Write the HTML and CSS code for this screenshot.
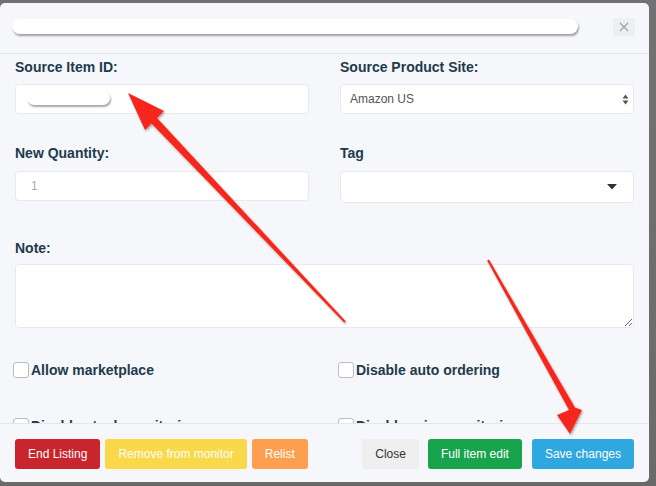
FILE: index.html
```html
<!DOCTYPE html>
<html>
<head>
<meta charset="utf-8">
<link rel="stylesheet" href="styles.css">
</head>
<body>
<div class="modal">
  <div class="modal-header">
    <div class="redact redact-title"></div>
    <button class="close-x" aria-label="Close">
      <svg width="10" height="10" viewBox="0 0 10 10"><path d="M1 1L9 9M9 1L1 9" stroke="#9a9ea4" stroke-width="1.1" fill="none"/></svg>
    </button>
  </div>
  <div class="modal-body">
    <div class="row row-1">
      <div class="field">
        <label class="lbl">Source Item ID:</label>
        <div class="input input-id"><span class="redact redact-id"></span></div>
      </div>
      <div class="field">
        <label class="lbl">Source Product Site:</label>
        <div class="input select">
          <span>Amazon US</span>
          <svg class="updown" width="7" height="11" viewBox="0 0 7 11"><path d="M3.5 0.5L6.5 4.5H0.5Z M3.5 10.5L6.5 6.5H0.5Z" fill="#555"/></svg>
        </div>
      </div>
    </div>
    <div class="row row-2">
      <div class="field">
        <label class="lbl lbl-2">New Quantity:</label>
        <div class="input placeholder">1</div>
      </div>
      <div class="field">
        <label class="lbl lbl-2">Tag</label>
        <div class="input tag">
          <svg class="caret" width="10" height="6" viewBox="0 0 10 6"><path d="M0 0H10L5 5.5Z" fill="#333"/></svg>
        </div>
      </div>
    </div>
    <div class="note-group">
      <label class="lbl">Note:</label>
      <textarea class="note"></textarea>
    </div>
    <div class="checks">
      <div class="check"><span class="box"></span>Allow marketplace</div>
      <div class="check"><span class="box"></span>Disable auto ordering</div>
      <div class="check"><span class="box"></span>Disable stock monitoring</div>
      <div class="check"><span class="box"></span>Disable price monitoring</div>
    </div>
  </div>
  <div class="modal-footer">
    <div class="group-left">
      <button class="btn btn-red">End Listing</button>
      <button class="btn btn-yellow">Remove from monitor</button>
      <button class="btn btn-orange">Relist</button>
    </div>
    <div class="group-right">
      <button class="btn btn-grey">Close</button>
      <button class="btn btn-green">Full item edit</button>
      <button class="btn btn-blue">Save changes</button>
    </div>
  </div>
</div>
<svg class="arrows" width="656" height="486" viewBox="0 0 656 486">
  <defs>
    <filter id="sh" x="-10%" y="-10%" width="120%" height="120%">
      <feDropShadow dx="1" dy="1.5" stdDeviation="1" flood-color="#000" flood-opacity="0.35"/>
    </filter>
  </defs>
  <g fill="#f7261b" filter="url(#sh)">
    <polygon points="128,93 164,111 157,118 345.7,321.3 344.3,322.7 151.5,123.5 145,130"/>
    <polygon points="570,434 582,410 575,407.5 488.9,259.6 487.1,260.4 569,410 557,415"/>
  </g>
</svg>
</body>
</html>
```
FILE: styles.css
```css
html, body {
  margin: 0;
  padding: 0;
}
body {
  width: 656px;
  height: 486px;
  overflow: hidden;
  background: linear-gradient(#727272, #6a6a6a);
  padding-top: 3px;
  box-sizing: border-box;
  font-family: "Liberation Sans", Arial, sans-serif;
  position: relative;
}
.modal {
  width: 649px;
  height: 479px;
  background: #f5f7fa;
  border-radius: 5px;
  display: flex;
  flex-direction: column;
  overflow: hidden;
}
.modal-header {
  height: 51px;
  flex: none;
  border-bottom: 1px solid #e3e6ea;
  position: relative;
  display: flex;
  align-items: flex-start;
  justify-content: flex-end;
  padding: 12px 14px 0 0;
  box-sizing: border-box;
}
.redact {
  display: block;
  background: #fff;
  border-radius: 8px;
  box-shadow: 1px 2px 2px rgba(0,0,0,0.35);
}
.redact-title {
  position: absolute;
  left: 12px;
  top: 16px;
  width: 566px;
  height: 15px;
}
.close-x {
  width: 22px;
  height: 18px;
  margin-top: 3px;
  border: none;
  border-radius: 3px;
  background: #eceef1;
  display: flex;
  align-items: center;
  justify-content: center;
  padding: 0;
}
.modal-body {
  height: 369px;
  flex: none;
  overflow: hidden;
  padding: 5px 15px 0 15px;
  box-sizing: border-box;
}
.row {
  display: grid;
  grid-template-columns: 294px 294px;
  column-gap: 31px;
}
.row-1 {
  margin-bottom: 31px;
}
.row-2 {
  margin-bottom: 37px;
}
.lbl {
  display: block;
  font-size: 14px;
  line-height: 17px;
  font-weight: bold;
  color: #1e3a4c;
  margin-bottom: 8px;
}
.lbl-2 {
  margin-bottom: 9px;
}
.input {
  height: 30px;
  background: #fff;
  border: 1px solid #e6e9ed;
  border-radius: 4px;
  box-sizing: border-box;
  display: flex;
  align-items: center;
  padding: 0 9px 0 9px;
  font-size: 12px;
  color: #555;
}
.input-id {
  padding-left: 11px;
}
.redact-id {
  width: 83px;
  height: 14px;
  border-radius: 7px;
  margin-top: -2px;
}
.select {
  justify-content: space-between;
  padding-right: 4px;
}
.placeholder {
  color: #aaa;
  padding-left: 15px;
}
.tag {
  height: 32px;
  justify-content: flex-end;
  padding-right: 16px;
}
.note-group .lbl {
  margin-bottom: 7px;
}
.note {
  display: block;
  width: 619px;
  height: 64px;
  box-sizing: border-box;
  border: 1px solid #e6e9ed;
  border-radius: 4px;
  background: #fff;
  margin: 0;
}
.checks {
  display: grid;
  grid-template-columns: 325px 294px;
  row-gap: 40px;
  margin-top: 34px;
  margin-left: -2px;
}
.check {
  display: flex;
  align-items: center;
  font-size: 14px;
  line-height: 15px;
  font-weight: bold;
  color: #1e3a4c;
}
.box {
  width: 14px;
  height: 14px;
  border: 1px solid #b9bcc0;
  border-radius: 3px;
  background: #fff;
  margin-right: 2px;
  flex: none;
}
.modal-footer {
  flex: none;
  height: 59px;
  border-top: 1px solid #e3e6ea;
  box-sizing: border-box;
  display: flex;
  justify-content: space-between;
  padding: 15px 15px 0 15px;
}
.group-left, .group-right {
  display: flex;
  align-items: flex-start;
}
.group-left .btn + .btn {
  margin-left: 5px;
}
.btn {
  height: 30px;
  border: none;
  border-radius: 3px;
  padding: 0 13px;
  font-family: "Liberation Sans", Arial, sans-serif;
  font-size: 12px;
  color: #fff;
  cursor: pointer;
}
.btn-red { background: #c8252c; }
.btn-yellow { background: #f9d849; }
.btn-orange { background: #fe9f4f; }
.btn-grey { background: #efefef; color: #333; margin-right: 9px; }
.btn-green { background: #17a44d; margin-right: 10px; }
.btn-blue { background: #2ea8df; }
.arrows {
  position: absolute;
  left: 0;
  top: 0;
  pointer-events: none;
}
```
